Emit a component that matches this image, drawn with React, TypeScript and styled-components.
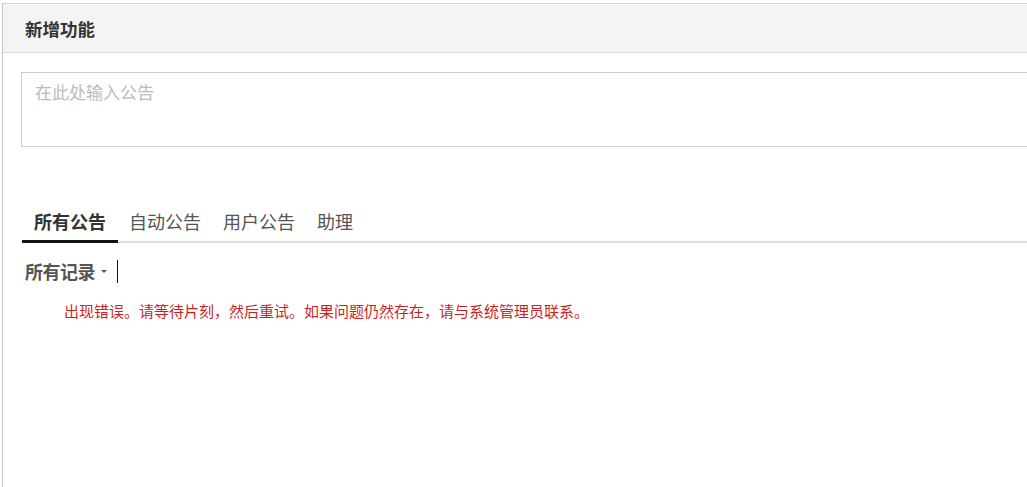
import React from "react";
import styled, { createGlobalStyle } from "styled-components";

const GlobalStyle = createGlobalStyle`
  html, body {
    margin: 0;
    padding: 0;
    background: #ffffff;
    overflow: hidden;
  }
  body {
    font-family: "Noto Sans CJK SC", "Noto Sans", sans-serif;
  }
`;

const Page = styled.div`
  padding: 3px 0 0 2px;
  height: 487px;
  box-sizing: border-box;
  width: 100vw;
  overflow: hidden;
`;

const Panel = styled.div`
  width: 1100px;
  height: 100%;
  border-top: 1px solid #d4d4d4;
  border-left: 1px solid #c8c8c8;
  box-sizing: border-box;
`;

const Header = styled.div`
  height: 48px;
  display: flex;
  align-items: center;
  padding-left: 22px;
  background: #f4f4f4;
  border-bottom: 1px solid #d8d8d8;
  font-size: 17.5px;
  font-weight: 700;
  color: #333333;
`;

const Body = styled.div`
  padding: 19px 0 0 18px;
  display: flex;
  flex-direction: column;
`;

const Notice = styled.textarea`
  width: 1060px;
  height: 75px;
  box-sizing: border-box;
  border: 1px solid #cccccc;
  padding: 7px 13px;
  font-family: inherit;
  font-size: 17px;
  line-height: 24px;
  resize: none;
  outline: none;
  &::placeholder {
    color: #bbbbbb;
  }
`;

const Tabs = styled.div`
  margin-top: 57px;
  margin-left: 1px;
  display: flex;
  border-bottom: 2px solid #dddddd;
`;

const Tab = styled.div<{ $active?: boolean }>`
  padding: 0 12px;
  height: 39px;
  line-height: 34px;
  font-size: 18px;
  font-weight: ${(p) => (p.$active ? 700 : 400)};
  color: ${(p) => (p.$active ? "#333333" : "#555555")};
  border-bottom: 3px solid ${(p) => (p.$active ? "#111111" : "transparent")};
  margin-bottom: -2px;
  box-sizing: border-box;
  &:not(:first-child) {
    padding: 0 11px;
  }
`;

const FilterRow = styled.div`
  display: flex;
  align-items: center;
  height: 26px;
  margin-top: 15px;
  padding-left: 4px;
`;

const FilterLabel = styled.span`
  font-size: 18px;
  font-weight: 700;
  color: #555555;
  line-height: 26px;
  letter-spacing: -0.5px;
`;

const Caret = styled.span`
  margin-left: 6px;
  width: 0;
  height: 0;
  border-left: 3px solid transparent;
  border-right: 3px solid transparent;
  border-top: 3px solid #555555;
`;

const Cursor = styled.span`
  margin-left: 10px;
  width: 1px;
  height: 23px;
  background: #111111;
`;

const ErrorText = styled.div`
  margin-top: 17px;
  padding-left: 43px;
  font-size: 15px;
  line-height: 20px;
  color: #cc1f1f;
`;

export default function App() {
  return (
    <>
      <GlobalStyle />
      <Page>
        <Panel>
          <Header>新增功能</Header>
          <Body>
            <Notice placeholder="在此处输入公告" />
            <Tabs>
              <Tab $active>所有公告</Tab>
              <Tab>自动公告</Tab>
              <Tab>用户公告</Tab>
              <Tab>助理</Tab>
            </Tabs>
            <FilterRow>
              <FilterLabel>所有记录</FilterLabel>
              <Caret />
              <Cursor />
            </FilterRow>
            <ErrorText>
              出现错误。请等待片刻，然后重试。如果问题仍然存在，请与系统管理员联系。
            </ErrorText>
          </Body>
        </Panel>
      </Page>
    </>
  );
}
